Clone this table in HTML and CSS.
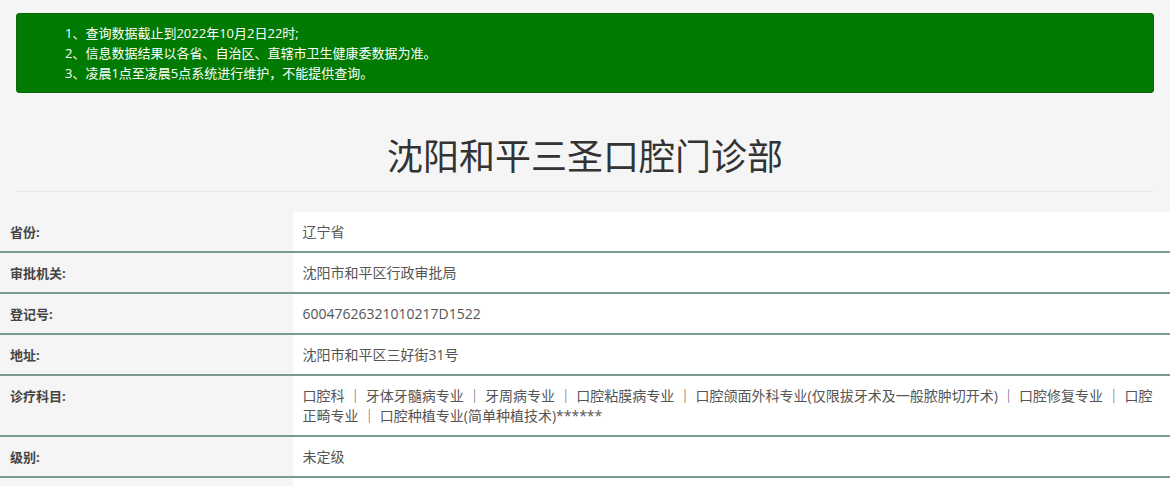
FILE: index.html
```html
<!DOCTYPE html>
<html lang="zh-CN">
<head>
<meta charset="utf-8">
<title>沈阳和平三圣口腔门诊部</title>
<link rel="stylesheet" href="styles.css">
</head>
<body>
<div class="container">
  <div class="alert">
    <ul class="notice">
      <li>1、查询数据截止到2022年10月2日22时;</li>
      <li>2、信息数据结果以各省、自治区、直辖市卫生健康委数据为准。</li>
      <li>3、凌晨1点至凌晨5点系统进行维护，不能提供查询。</li>
    </ul>
  </div>
  <h1 class="title">沈阳和平三圣口腔门诊部</h1>
  <hr class="divider">
</div>
<table class="info">
  <tr><th>省份:</th><td>辽宁省</td></tr>
  <tr><th>审批机关:</th><td>沈阳市和平区行政审批局</td></tr>
  <tr><th>登记号:</th><td>60047626321010217D1522</td></tr>
  <tr><th>地址:</th><td>沈阳市和平区三好街31号</td></tr>
  <tr><th>诊疗科目:</th><td>口腔科 ｜ 牙体牙髓病专业 ｜ 牙周病专业 ｜ 口腔粘膜病专业 ｜ 口腔颌面外科专业(仅限拔牙术及一般脓肿切开术) ｜ 口腔修复专业 ｜ 口腔正畸专业 ｜ 口腔种植专业(简单种植技术)******</td></tr>
  <tr><th>级别:</th><td>未定级</td></tr>
  <tr class="spacer"><th>&nbsp;</th><td>&nbsp;</td></tr>
</table>
</body>
</html>
```
FILE: styles.css
```css
* { box-sizing: border-box; }
html, body {
  margin: 0;
  padding: 0;
  background: #f5f5f5;
  font-family: "Open Sans", "Noto Sans CJK SC", sans-serif;
  color: #555;
}
.container {
  padding: 13px 16px 0;
}
.alert {
  background: #007a00;
  border: 1px solid #0a6a0a;
  border-radius: 3px;
  padding: 9px 15px;
  color: #fff;
}
.notice {
  list-style: none;
  margin: 0;
  padding: 0 0 0 33px;
  font-size: 13px;
  line-height: 20px;
}
.title {
  margin: 42px 0 0;
  text-align: center;
  font-size: 36px;
  line-height: 44px;
  font-weight: 400;
  color: #333;
}
.divider {
  margin: 12px 0 20px;
  border: 0;
  border-top: 1px solid #e8e8e8;
  height: 0;
}
.info {
  width: 100%;
  border-collapse: collapse;
  font-size: 13px;
  line-height: 20px;
}
.info th, .info td {
  padding: 10px 10px 9px;
  border-bottom: 2px solid #7b9b8e;
  vertical-align: top;
  text-align: left;
}
.info th {
  width: 25%;
  font-weight: 700;
  color: #444;
  background: transparent;
}
.info td {
  background: #fff;
  color: #555;
  font-size: 14px;
}
```
